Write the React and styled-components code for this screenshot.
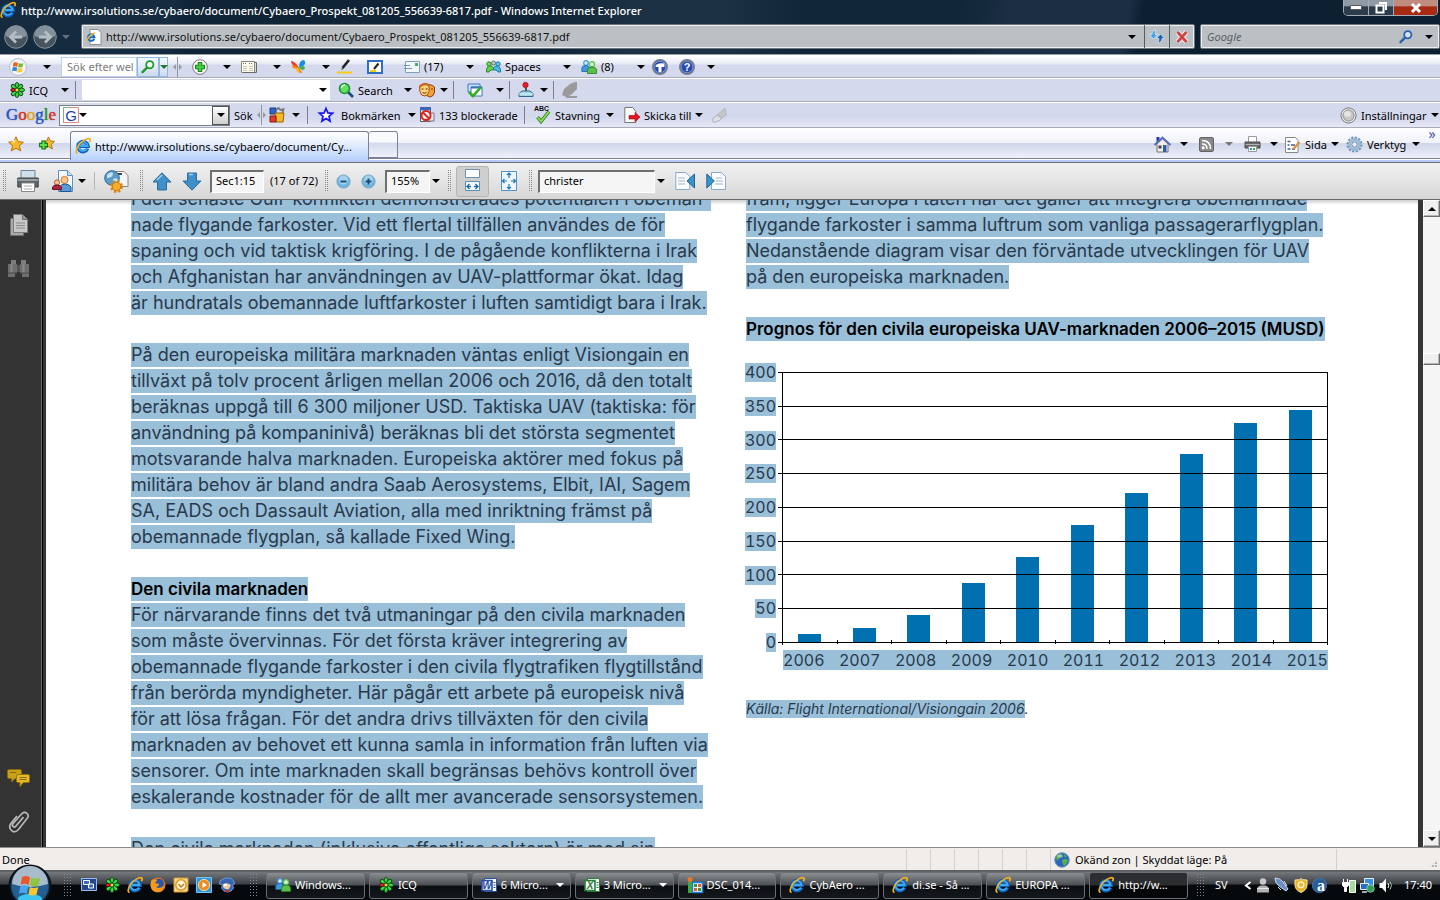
import React from 'react';
import styled, { createGlobalStyle, css } from 'styled-components';

const GlobalStyle = createGlobalStyle`
  *, *::before, *::after { box-sizing: border-box; }
  body { margin: 0; font-family: "Noto Sans", "Open Sans", sans-serif; font-size: 11px; color: #000; overflow: hidden; }
  button, input { font: inherit; color: inherit; }
  button { border: 0; padding: 0; background: none; }
  h2, p, ul { margin: 0; padding: 0; }
`;

/* ---------- shared pieces ---------- */

const Svg = styled.svg`
  display: block;
  flex: none;
  overflow: visible;
`;

const Caret = styled.i`
  flex: none;
  border: 4px solid transparent;
  border-top-color: ${(p) => p.$color || '#000'};
  border-bottom: 0;
`;

const Tool = styled.button`
  display: flex;
  align-items: center;
  flex: none;
  gap: ${(p) => p.$gap || 4}px;
  height: 20px;
  width: ${(p) => p.$w}px;
  margin-right: ${(p) => p.$mr ?? 10}px;
  white-space: nowrap;
  & > i { margin-left: auto; }
`;

const Rule = styled.span`
  flex: none;
  width: 1px;
  height: 18px;
  margin-right: ${(p) => p.$mr ?? 10}px;
  background: ${(p) => p.$color || '#7c7f8f'};
`;

const Grip = styled.span`
  flex: none;
  width: ${(p) => p.$w || 4}px;
  height: 22px;
  margin-right: ${(p) => p.$mr ?? 10}px;
  background-image: conic-gradient(at 1px 1px, transparent 75%, ${(p) => p.$color || '#8a8a8a'} 0);
  background-size: ${(p) => p.$pitch || 2}px ${(p) => p.$pitch || 2}px;
`;

const Spacer = styled.span`
  flex: 1;
`;

/* ---------- icons ---------- */

const IE = ({ s = 16 }) => (
  <Svg width={s} height={s} viewBox="0 0 16 16">
    <path d="M12.6 10.6A5 5 0 1 1 13 8.2H5" fill="none" stroke="#0b5fc0" strokeWidth="3.6" />
    <path d="M12 10.6A4.6 4.6 0 1 1 12.6 8H5" fill="none" stroke="#3fa9f2" strokeWidth="1.8" />
    <path d="M2.6 15C.6 15.6.6 12 3.4 7.6 6.6 3 12.6-.2 14.6 1c1 .7.6 2.2-.2 3.4" fill="none" stroke="#f2b01e" strokeWidth="1.7" />
  </Svg>
);

const PageIE = () => (
  <Svg width="16" height="16" viewBox="0 0 16 16">
    <path d="M4 .5h8l3 3v12H4z" fill="#fff" stroke="#8a8f94" />
    <g transform="translate(0 3) scale(.65)">
      <path d="M12.6 10.6A5 5 0 1 1 13 8.2H5" fill="none" stroke="#1368c8" strokeWidth="3" />
      <path d="M2 14C1 10 9 1 14 2" fill="none" stroke="#f2b01e" strokeWidth="2" />
    </g>
  </Svg>
);

const Orb = () => (
  <Svg width="18" height="18" viewBox="0 0 18 18">
    <circle cx="9" cy="9" r="8.5" fill="#f4f4f6" stroke="#b9bdc8" />
    <g transform="translate(3 3) scale(.75)">
      <path d="M2 2q3-1 6 .5L7 8q-3-2-6-.5z" fill="#f0602a" />
      <path d="M9 3q3 1 6 0l-1 5q-3 1-6 0z" fill="#7ab82a" />
      <path d="M1 8.5q3-1 6 .5l-1 5q-3-2-6-.5z" fill="#2f86dd" />
      <path d="M8 9q3 1.5 6 .5l-1 5q-3 1-6 0z" fill="#fcc72b" />
    </g>
  </Svg>
);

const Magnifier = ({ color = '#1f9a2c', s = 14 }) => (
  <Svg width={s} height={s} viewBox="0 0 14 14">
    <circle cx="8.8" cy="4.8" r="3.6" fill="#fff" fillOpacity=".5" stroke={color} strokeWidth="1.8" />
    <path d="M6 7.6 1.5 12.2" stroke={color} strokeWidth="2.4" strokeLinecap="round" />
  </Svg>
);

const PlusCircle = () => (
  <Svg width="16" height="16" viewBox="0 0 16 16">
    <circle cx="8" cy="8" r="7.3" fill="#fff" stroke="#777" />
    <path d="M8 3v10M3 8h10" stroke="#18851d" strokeWidth="4.6" />
    <path d="M8 4v8M4 8h8" stroke="#43cf3f" strokeWidth="2.6" />
  </Svg>
);

const News = () => (
  <Svg width="16" height="12" viewBox="0 0 16 12">
    <path d="M.5.5h13v11H.5z" fill="#fbf9ea" stroke="#8b8878" />
    <path d="M13.5 1.5h2v10h-13" fill="none" stroke="#6b6a62" />
    <path d="M2 2.5h4M8 2.5h4" stroke="#77756a" strokeDasharray="1 1" />
    <path d="M2 5.5h4M2 7.5h4M2 9.5h4M8 5.5h4M8 7.5h4M8 9.5h4" stroke="#cbc8b8" />
  </Svg>
);

const Butterfly = () => (
  <Svg width="16" height="14" viewBox="0 0 16 14">
    <path d="M8 8Q4 1 0 1q0 5 8 7z" fill="#ef3b24" />
    <path d="M8 8Q1 4 1 6q1 4 7 2z" fill="#ff8a00" />
    <path d="M8 7.500Q8 0 13 0q3 3-1 6z" fill="#1a8ce8" />
    <path d="M8 7.500q5-3 6 0-1 5-6 0z" fill="#35b44a" />
    <path d="M8 7.500 11.500 13Q6 13 5 9.500z" fill="#ff7a1a" />
    <path d="M6.500 7.500 9 13q-3-1-4-3z" fill="#ffcf20" />
  </Svg>
);

const Pen = () => (
  <Svg width="16" height="15" viewBox="0 0 16 15">
    <path d="M12 1 5.5 9" stroke="#222" strokeWidth="2.6" />
    <path d="M5.5 8 4 11.5l3-2z" fill="#555" />
    <path d="M0 13.5h15" stroke="#f6cc12" strokeWidth="2" />
  </Svg>
);

const Note = () => (
  <Svg width="16" height="14" viewBox="0 0 16 14">
    <path d="M1 1h14v12H1z" fill="#fffef4" stroke="#2c6fc4" strokeWidth="2" />
    <path d="M11.5 3.5 7 9" stroke="#222" strokeWidth="2" />
    <path d="M3 11h6" stroke="#f6cc12" strokeWidth="2" />
  </Svg>
);

const Mail = () => (
  <Svg width="16" height="12" viewBox="0 0 16 12">
    <path d="M1.5.5h14v11h-14z" fill="#f1f8fb" stroke="#7fa3b5" />
    <path d="M0 4.500h6M0 7.500h8" stroke="#6a9ab8" />
    <path d="M11 2h3v3h-3z" fill="#4aa86a" />
  </Svg>
);

const People = ({ a = '#3f97dd', b = '#5cc04a' }) => (
  <Svg width="16" height="14" viewBox="0 0 16 14">
    <circle cx="5" cy="3" r="2.3" fill="#d6ecff" stroke={a} strokeWidth="1.2" />
    <path d="M.8 11.5V8Q1 5.5 5 5.5q3 0 3.5 2.5v3.5z" fill={a} stroke="#1b68ad" strokeWidth=".8" />
    <circle cx="11" cy="4.2" r="2.5" fill="#d9f8c8" stroke={b} strokeWidth="1.2" />
    <path d="M6.5 13.5V10Q7 7 11 7q4.3 0 4.6 3v3.5z" fill={b} stroke="#23801c" strokeWidth=".8" />
  </Svg>
);

const Spaces = () => (
  <Svg width="15" height="13" viewBox="0 0 15 13">
    <circle cx="3" cy="4" r="2.2" fill="#6fd95b" stroke="#2f8a28" />
    <circle cx="12" cy="4" r="2.2" fill="#59c7ef" stroke="#1f7fa8" />
    <path d="M.5 12V9l2-3h3l2 2v2H5l-2 2z" fill="#5fce4b" stroke="#2f8a28" />
    <path d="M14.500 12V9l-2-3h-3l-2 2v2H10l2 2z" fill="#49b7df" stroke="#1f7fa8" />
    <circle cx="7.5" cy="3" r="2" fill="#c3c8cc" stroke="#6b7175" />
  </Svg>
);

const BlueRound = ({ kind }) => (
  <Svg width="16" height="16" viewBox="0 0 16 16">
    <circle cx="8" cy="8" r="7.2" fill="#2a49ad" stroke="#7b7f87" strokeWidth="1.6" />
    <circle cx="8" cy="8" r="5.8" fill="none" stroke="#8fb0ef" strokeWidth=".7" />
    {kind === 'help' ? (
      <text x="8" y="12" textAnchor="middle" fontFamily="Liberation Sans, sans-serif" fontWeight="700" fontSize="11" fill="#fff">?</text>
    ) : (
      <path d="M3.6 7Q5 3.500 12.400 4.500V8H9.5v5h-3V8H3.6z" fill="#fff" />
    )}
  </Svg>
);

const Flower = () => (
  <Svg width="16" height="16" viewBox="0 0 16 16">
    {[0, 45, 90, 135, 180, 225, 315].map((d) => (
      <ellipse key={d} cx="8" cy="3.4" rx="1.9" ry="2.9" fill="#3ad845" stroke="#0c3d10" strokeWidth=".9" transform={`rotate(${d} 8 8)`} />
    ))}
    <ellipse cx="8" cy="4" rx="1.6" ry="2.2" fill="#e8222a" stroke="#4f0d0d" strokeWidth=".9" transform="rotate(270 8 8)" />
    <circle cx="8" cy="8" r="1.6" fill="#f5ea3a" stroke="#3c5a10" strokeWidth=".6" />
  </Svg>
);

const GreenSearch = () => (
  <Svg width="16" height="16" viewBox="0 0 16 16">
    <path d="m10 10 5 5" stroke="#14507e" strokeWidth="2.6" />
    <circle cx="6.5" cy="6.5" r="5" fill="#62e25f" stroke="#1d8f38" strokeWidth="1.6" />
    <path d="M3.5 6q.5-3 3.5-3" stroke="#e9ffe4" strokeWidth="1.5" fill="none" />
  </Svg>
);

const Faces = () => (
  <Svg width="16" height="15" viewBox="0 0 16 15">
    <path d="M7 3q4-3 8.500 1v5q-.5 4-4 5-4 0-4.500-4z" fill="#f2a33a" stroke="#8a3a10" />
    <path d="M.5 3q4-4 9-1.5 1 2 .5 7-1 4-4 4.500-4 0-5-4z" fill="#fcd27a" stroke="#a04a12" />
    <path d="M2.500 6h2M6.500 6h2M3.500 9.500q2 1.500 4 0M12 6h2" stroke="#7a2f08" fill="none" />
    <path d="M.5 4q4-4 9-2" stroke="#c8661a" strokeWidth="2" fill="none" />
  </Svg>
);

const CheckWin = () => (
  <Svg width="17" height="15" viewBox="0 0 17 15">
    <path d="M1 1h12v8H1z" fill="#cfe3fa" stroke="#3a74c4" />
    <path d="M4 4h11v9H4z" fill="#fff" stroke="#3a74c4" />
    <path d="M4 4.5h11" stroke="#3a74c4" strokeWidth="2" />
    <path d="m2 9 4 4 8-9" fill="none" stroke="#2fae1f" strokeWidth="2.6" />
  </Svg>
);

const Joystick = () => (
  <Svg width="16" height="16" viewBox="0 0 16 16">
    <path d="M8 5v6" stroke="#555" strokeWidth="2" />
    <circle cx="7.5" cy="3" r="2.7" fill="#e8202a" stroke="#7d0c10" strokeWidth=".6" />
    <path d="m1 11.5 3-2.5h8l3 2.5v3H1z" fill="#9fd3e6" stroke="#2d6a8c" />
    <path d="M1 12h14" stroke="#e6f7fc" />
  </Svg>
);

const Eraser = () => (
  <Svg width="16" height="16" viewBox="0 0 16 16">
    <path d="M15 0v7l-6 6-5 2-4-2 2-6 6-5 5-2z" fill="#9b9b9b" />
    <path d="M4 15h11" stroke="#9b9b9b" strokeWidth="2" />
  </Svg>
);

const Brush = () => (
  <Svg width="16" height="15" viewBox="0 0 16 15">
    <path d="m14 0 1.5 7-5 3.5-4-3.5z" fill="#c4c6cc" stroke="#a2a5ad" strokeWidth=".6" />
    <path d="m6.5 7 4 3.5-2 2-6 2L1 12l2.5-3z" fill="#dddfe4" stroke="#a2a5ad" strokeWidth=".8" />
  </Svg>
);

const GBox = () => (
  <Svg width="16" height="16" viewBox="0 0 16 16">
    <path d="M.5.5h15v15H.5z" fill="#fff" stroke="#d88" />
    <path d="M.5 15.5V.5h8" fill="none" stroke="#7fae85" />
    <text x="8" y="13.5" textAnchor="middle" fontFamily="Liberation Sans, sans-serif" fontSize="15" fill="#1f3fae">G</text>
  </Svg>
);

const Gadgets = () => (
  <Svg width="17" height="16" viewBox="0 0 17 16">
    <path d="M1 1h6v6H1z" fill="#2f64c8" stroke="#183a80" />
    <path d="M7 3 9.5 1l2 2 3-1-1 4" fill="none" stroke="#777" strokeWidth="1.8" />
    <path d="M6 6h9l-1 9H7z" fill="#f4b92a" stroke="#9a6608" />
    <path d="M1 9h6v6H1z" fill="#e03a2a" stroke="#80180e" />
  </Svg>
);

const StarOutline = () => (
  <Svg width="16" height="16" viewBox="0 0 16 16">
    <path d="m8 1.5 1.900 4.400 4.700.4-3.600 3.100 1.100 4.700L8 11.600l-4.100 2.500L5 9.400 1.400 6.300l4.700-.4z" fill="#fff" stroke="#1616f0" strokeWidth="1.7" />
  </Svg>
);

const Blocked = () => (
  <Svg width="16" height="16" viewBox="0 0 16 16">
    <path d="M1.500.5h10v14h-10z" fill="#fff" stroke="#555" />
    <path d="M1 2h11" stroke="#3568c8" strokeWidth="3" />
    <path d="M9 6h6v8H4" fill="#e8eaf0" stroke="#777" />
    <circle cx="7" cy="8.5" r="4.500" fill="#fff" fillOpacity=".8" stroke="#e0201c" strokeWidth="2" />
    <path d="m4 5.5 6 6" stroke="#e0201c" strokeWidth="2" />
  </Svg>
);

const Spell = () => (
  <Svg width="17" height="18" viewBox="0 0 17 18">
    <text x="0" y="5" fontFamily="Liberation Sans, sans-serif" fontWeight="700" fontSize="7" fill="#111">ABC</text>
    <path d="m3.5 11 3.500 4.500 8-10" fill="none" stroke="#2e7f1d" strokeWidth="3.4" />
    <path d="m3.5 11 3.500 4.500 8-10" fill="none" stroke="#8fdc5e" strokeWidth="1.8" />
  </Svg>
);

const SendTo = () => (
  <Svg width="16" height="16" viewBox="0 0 16 16">
    <path d="M.8.5h8l3 4v11h-11z" fill="#fbfbf6" stroke="#777" />
    <path d="M5 8.500h6V5.500l5 4.500-5 5v-3H5z" fill="#e81420" stroke="#8f0a10" strokeWidth=".6" />
  </Svg>
);

const GoldStar = () => (
  <Svg width="16" height="16" viewBox="0 0 16 16">
    <path d="m8 .8 2.200 4.900 5.200.5-4 3.500 1.300 5.200L8 12.200l-4.700 2.700 1.300-5.200-4-3.500 5.200-.5z" fill="#fbb829" stroke="#b9720d" />
    <path d="M8 3 6.700 6.600 3 7z" fill="#ffe9a0" />
  </Svg>
);

const AddStar = () => (
  <Svg width="17" height="16" viewBox="0 0 17 16">
    <path d="m10.5 1 1.800 4 4.200.4-3.200 3 1 4.600-3.800-2.400-4 2.400 1-4.600-3-3 4.200-.4z" fill="#fbb829" stroke="#b9720d" />
    <path d="M5.500 4.500v9M1 9h9" stroke="#157a1a" strokeWidth="4.4" />
    <path d="M5.500 5.500v7M2 9h7" stroke="#5fe04a" strokeWidth="2.2" />
  </Svg>
);

const House = () => (
  <Svg width="17" height="17" viewBox="0 0 17 17">
    <path d="M3 8v8h11V8L8.500 3z" fill="#f4f1ea" stroke="#77736a" />
    <path d="M2.500 1h3v5h-3z" fill="#2a34a8" />
    <path d="M.5 9 8.500 1.500l8 7.500" fill="none" stroke="#5a6fc4" strokeWidth="2" />
    <path d="M9 9h3.500v7H9z" fill="#2d5faa" />
    <path d="M4.500 9.500h3v3h-3z" fill="#454545" />
  </Svg>
);

const Feed = () => (
  <Svg width="15" height="15" viewBox="0 0 15 15">
    <rect x=".5" y=".5" width="14" height="14" rx="1.500" fill="#898989" stroke="#636363" />
    <circle cx="4.200" cy="10.800" r="1.500" fill="#fff" />
    <path d="M3 7q5 0 5 5M3 3.500q8.500 0 8.500 8.500" fill="none" stroke="#fff" strokeWidth="1.600" />
  </Svg>
);

const SmallPrinter = () => (
  <Svg width="17" height="16" viewBox="0 0 17 16">
    <path d="M4.500.5h8v6h-8z" fill="#fff" stroke="#999" />
    <path d="M1 6h15v6H1z" fill="#6a6a6a" stroke="#4a4a4a" />
    <path d="M1.500 8.500h14" stroke="#b5b5b5" />
    <path d="M4.500 10.500h8v5h-8z" fill="#fff" stroke="#999" />
    <path d="M6 13h2" stroke="#2f86dd" strokeWidth="2" />
    <path d="M9 13h2" stroke="#2fae1f" strokeWidth="2" />
  </Svg>
);

const PageEdit = () => (
  <Svg width="17" height="17" viewBox="0 0 17 17">
    <path d="M1.500 1.500h10l2.500 3v12h-12.500z" fill="#fff" stroke="#888" />
    <path d="M3.500 5.500h3M3.500 9h2M3.500 13h3M7 9h4M8 13h3" stroke="#4a5a90" strokeWidth="1.500" />
    <path d="m15.500 6-6 7" stroke="#d9973a" strokeWidth="2.400" />
  </Svg>
);

const Gear = () => (
  <Svg width="17" height="17" viewBox="0 0 17 17">
    <circle cx="8.500" cy="8.500" r="6.800" fill="none" stroke="#7396b8" strokeWidth="2.400" strokeDasharray="2.300 1.260" />
    <circle cx="8.500" cy="8.500" r="4.800" fill="#dce9f5" stroke="#9dbad4" strokeWidth="3" />
    <circle cx="8.500" cy="8.500" r="2.600" fill="#eef2fb" stroke="#6a8cae" />
  </Svg>
);

const GreyBall = () => (
  <Svg width="17" height="17" viewBox="0 0 17 17">
    <circle cx="8.500" cy="8.500" r="7.600" fill="#eee" stroke="#777" />
    <circle cx="8.500" cy="8.500" r="5.600" fill="#c6c6c6" stroke="#8f8f8f" />
    <ellipse cx="7.500" cy="7" rx="3.500" ry="3" fill="#e3e3e3" />
  </Svg>
);

const Printer = () => (
  <Svg width="22" height="24" viewBox="0 0 22 24">
    <path d="M4 1.500h14v8H4z" fill="#cfe0ea" stroke="#6f8796" />
    <path d="M.8 9h20.400v9H.8z" fill="#5e6468" stroke="#3d4245" />
    <path d="M1 11h20" stroke="#9aa0a4" strokeWidth="2" />
    <path d="M4.500 14h13v8.500h-13z" fill="#fff" stroke="#888" />
    <path d="M7 17h8M7 20h8" stroke="#aaa" />
  </Svg>
);

const Collab = () => (
  <Svg width="22" height="24" viewBox="0 0 22 24">
    <path d="M6.500 1.500h9l5 5v16H6.500z" fill="#f3f9fe" stroke="#5b8fc0" />
    <path d="M15.500 1.500v5h5" fill="#c6dff4" stroke="#5b8fc0" />
    <circle cx="12.500" cy="11" r="3.600" fill="#f9c48c" stroke="#d07c2c" />
    <path d="M8 22.500v-5q1-2.500 5-2.500t6 3v4.500z" fill="#5b9ad8" stroke="#1d5798" />
    <circle cx="5" cy="13.500" r="2.600" fill="#f9c48c" stroke="#b35a2c" />
    <path d="M.5 20.500V18q1-2 4.500-2t4.500 2v2.500z" fill="#a82440" stroke="#6e1026" />
  </Svg>
);

const GlobeGear = () => (
  <Svg width="26" height="24" viewBox="0 0 26 24">
    <path d="M11 2.500h9l4 4v11H11z" fill="#f5f5f5" stroke="#888" />
    <path d="M11 5h7" stroke="#444" strokeWidth="2" />
    <circle cx="8" cy="9" r="7.300" fill="#5d9bc8" stroke="#2e6a98" />
    <path d="M3 6q3-4 6-2 0 3-2 4T3 9zM9 10q4-2 5 1l-3 4q-2-2-2-5z" fill="#c7e2f2" />
    <circle cx="12.500" cy="17.500" r="5.200" fill="none" stroke="#d98a14" strokeWidth="2.600" strokeDasharray="2.300 1.800" />
    <circle cx="12.500" cy="17.500" r="4.300" fill="#f9ab2e" stroke="#c4760c" />
  </Svg>
);

const BigArrow = ({ down }) => (
  <Svg width="20" height="19" viewBox="0 0 20 19">
    <path transform={down ? 'rotate(180 10 9.500)' : undefined} d="M10 .8 19 10h-4.500v8h-9v-8H1z" fill="#3f8fc8" stroke="#2b6c9e" />
    <path d={down ? 'M7 2.500h4' : 'M10 3 5 8'} stroke="#a6d3ef" strokeWidth="1.500" />
  </Svg>
);

const ZoomDot = ({ plus }) => (
  <Svg width="15" height="15" viewBox="0 0 15 15">
    <circle cx="7.500" cy="7.500" r="6.600" fill="#6fb4de" stroke="#7ba7c4" />
    <circle cx="7.500" cy="6" r="4.500" fill="#a5d2ec" />
    <path d={plus ? 'M7.500 4.500v6M4.500 7.500h6' : 'M4.500 7.500h6'} stroke="#174f7c" strokeWidth="2" />
  </Svg>
);

const FitWidth = () => (
  <Svg width="17" height="24" viewBox="0 0 17 24">
    <path d="M1.500.5h14v8h-14z" fill="#fff" stroke="#6f93ad" />
    <path d="M1.500 12.500h14v9h-14z" fill="#f2f9fd" stroke="#5b8fb4" />
    <path d="M3 17.500h4M10 17.500h4M5.500 15 3 17.500 5.500 20M11.500 15l2.500 2.500-2.500 2.500" fill="none" stroke="#1f6a9e" strokeWidth="1.300" />
  </Svg>
);

const FitPage = () => (
  <Svg width="16" height="20" viewBox="0 0 16 20">
    <path d="M.5.500h15v19H.5z" fill="#eef7fd" stroke="#4f93c6" />
    <path d="M8 2v5M8 13v5M1.500 10H6M10 10h4.500M6 4l2-2 2 2M6 16l2 2 2-2M3.500 8l-2 2 2 2M12.500 8l2 2-2 2" fill="none" stroke="#1f78b4" strokeWidth="1.200" />
  </Svg>
);

const FindDoc = ({ prev }) => (
  <Svg width="21" height="18" viewBox="0 0 21 18">
    <path d={prev ? 'M.8.500h10l4 4v13h-14z' : 'M5.500.500h10l4 4v13h-14z'} fill="#fafcff" stroke="#88a8cc" />
    <path d={prev ? 'M3 6h7M3 9h7M3 12h7' : 'M10 6h6M10 9h7M9 12h8'} stroke="#a9b2bc" />
    <path d={prev ? 'M19.500 2v14L12 9z' : 'M.8 2v14L8.300 9z'} fill="#3a93c9" stroke="#1d6796" />
  </Svg>
);

const PagesIcon = () => (
  <Svg width="18" height="22" viewBox="0 0 18 22">
    <path d="M.5 4.500h13v17H.5z" fill="#a9a9a9" stroke="#6f6f6f" />
    <path d="M3.500.5h9l5 5v13h-14z" fill="#c8c8c8" stroke="#7d7d7d" />
    <path d="M12.500.5v5h5" fill="#999" stroke="#6b6b6b" />
    <path d="M6 9h9M6 11.500h9M6 14h9" stroke="#8a8a8a" />
  </Svg>
);

const Binoculars = () => (
  <Svg width="21" height="18" viewBox="0 0 21 18">
    <path d="M3 0h5v4H3zM13 0h5v4h-5z" fill="#7d7d7d" />
    <path d="M0 4h9v13H0zM12 4h9v13h-9z" fill="#6e6e6e" />
    <path d="M9 5h3v7H9z" fill="#565656" />
    <path d="M7 13h2v5H7zM12 13h2v5h-2z" fill="#333" />
    <path d="M3.500 4v9M15.500 4v9" stroke="#8a8a8a" strokeWidth="2" />
    <path d="M0 13h9M12 13h9" stroke="#4b4b4b" />
  </Svg>
);

const Bubbles = () => (
  <Svg width="23" height="18" viewBox="0 0 23 18">
    <path d="M2 .5h11q1.500 0 1.500 1.500v6q0 1.500-1.500 1.500H8L4.500 13V9.500H2Q.5 9.500.5 8V2Q.5.500 2 .5z" fill="#c9a01a" stroke="#8a6a08" />
    <path d="M11 5.500h10q1.500 0 1.500 1.500v5q0 1.500-1.500 1.500h-4.500L13 17.500v-4h-2q-1.500 0-1.500-1.500V7q0-1.500 1.500-1.500z" fill="#e3b926" stroke="#94720c" />
    <path d="M12.500 8.500h7M12.500 10.500h7M3 3.500h6" stroke="#8a6a08" />
  </Svg>
);

const Clip = () => (
  <Svg width="20" height="22" viewBox="0 0 20 22">
    <path d="m14.500 6-7.500 9q-1.500 2-3 .5T4.500 12L12.500 3q3-3 5.500-.5t0 5L9.500 18.500q-4 4-7 1t-1-6.500L8 5" fill="none" stroke="#b9b9b9" strokeWidth="1.700" />
  </Svg>
);

const Globe = () => (
  <Svg width="16" height="16" viewBox="0 0 16 16">
    <circle cx="8" cy="8" r="7.300" fill="#2a66c0" stroke="#7b98b8" />
    <path d="M2 5q3-4 6-3 0 3-2 4T3 9zM8 8q4-2 6 0-1 5-4 6-2-3-2-6zM10 2l3 2-2 2z" fill="#58b04a" />
    <ellipse cx="6" cy="4" rx="3" ry="1.600" fill="#fff" fillOpacity=".4" />
  </Svg>
);

const Desktop = () => (
  <Svg width="16" height="14" viewBox="0 0 16 14">
    <path d="M.5.500h15v12H.5z" fill="#21488f" stroke="#9fb9e6" />
    <path d="M2.500 2.500h6v4h-6zM7.500 6h5v4h-5z" fill="#3d68b8" stroke="#fff" />
  </Svg>
);

const Firefox = () => (
  <Svg width="16" height="16" viewBox="0 0 16 16">
    <circle cx="8" cy="8" r="7.500" fill="#e8731a" />
    <circle cx="9" cy="6.500" r="4.800" fill="#2a56a8" />
    <path d="M1 4Q3 1 4 3q2-1 3 .5L5 6q2 1 4 .5 0 3-3 3.500 3 2.500 8-1-2 6-7 6T.6 9z" fill="#f79a1e" />
  </Svg>
);

const Outlook = () => (
  <Svg width="16" height="16" viewBox="0 0 16 16">
    <path d="M1 1h14v13l-2 1H1z" fill="#f7d793" stroke="#d59a28" />
    <circle cx="8" cy="8" r="5.200" fill="#fff6dc" stroke="#dd9a22" strokeWidth="1.600" />
    <path d="m5.500 7 2.500 3 3-3" fill="none" stroke="#b87912" strokeWidth="1.400" />
  </Svg>
);

const MediaPlayer = () => (
  <Svg width="16" height="16" viewBox="0 0 16 16">
    <path d="M.5.500h15v15H.5z" fill="#2b97dd" stroke="#7cc4ee" />
    <circle cx="8" cy="8" r="5.600" fill="#f08a1c" stroke="#fbd69c" />
    <path d="m6.500 5 4.500 3-4.500 3z" fill="#fff" />
  </Svg>
);

const Hedgehog = () => (
  <Svg width="16" height="16" viewBox="0 0 16 16">
    <path d="M1 4q4-4 9-3 5 1 5.500 6l-2 1 1 3q-2 4-6 4t-6-4l1-3-3-1z" fill="#3565b4" stroke="#6f9bd8" />
    <path d="M4 7q4-2 8 1l-2 4q-4 1-6-2z" fill="#f0c9a0" />
    <path d="M5 7h3v2H5z" fill="#fff" />
    <path d="M6 14h5" stroke="#c83020" strokeWidth="1.500" />
  </Svg>
);

const Office = ({ letter, color }) => (
  <Svg width="16" height="16" viewBox="0 0 16 16">
    <path d="M3.500 1.500h12v13h-12z" fill="#fff" stroke={color} />
    <path d="M1 3.500h10v10H1z" fill="#f4f7fb" stroke={color} strokeWidth="1.600" />
    <text x="6" y="12" textAnchor="middle" fontFamily="Liberation Sans, sans-serif" fontStyle="italic" fontWeight="700" fontSize="10" fill={color}>{letter}</text>
    <path d="M12.500 5.500h2M12.500 8h2M12.500 10.500h2" stroke={color} />
  </Svg>
);

const Photo = () => (
  <Svg width="16" height="16" viewBox="0 0 16 16">
    <path d="M1 5h4v11H1z" fill="#3fa83a" />
    <circle cx="3" cy="2.500" r="2.500" fill="#f07818" />
    <path d="M5.500 5.500h10v10h-10z" fill="#fff" stroke="#1e7ade" strokeWidth="1.600" />
    <path d="M7 7h3v3H7zM11 11h3v3h-3z" fill="#2a9a3c" />
    <path d="M11 7h3v3h-3zM7 11h3v3H7z" fill="#f05a28" />
  </Svg>
);

const Shuttle = () => (
  <Svg width="16" height="16" viewBox="0 0 16 16">
    <path d="M1 1q5 0 8 4l5 7-2 2-7-5Q1 6 1 1z" fill="#6a8fc4" stroke="#c8d8ee" />
    <path d="m4 10 3 3M10 4l3 5" stroke="#dfe8f4" />
  </Svg>
);

const Shield = () => (
  <Svg width="14" height="15" viewBox="0 0 14 15">
    <path d="M1 2q6 0 6-1.500Q7 2 13 2v5q0 5-6 7.500Q1 12 1 7z" fill="#e8b62c" stroke="#fbe6a2" />
    <circle cx="7" cy="6.800" r="2.800" fill="none" stroke="#fff4c8" strokeWidth="1.400" />
  </Svg>
);

const ABall = () => (
  <Svg width="16" height="15" viewBox="0 0 16 15">
    <circle cx="7.500" cy="7.500" r="7" fill="#2a5c9c" stroke="#4a78ac" />
    <text x="9" y="12.500" textAnchor="middle" fontFamily="Liberation Serif, serif" fontWeight="700" fontSize="16" fill="#fff">a</text>
  </Svg>
);

const Pawn = () => (
  <Svg width="14" height="15" viewBox="0 0 14 15">
    <circle cx="7" cy="3.500" r="3.200" fill="#c9c9c9" />
    <path d="M1 14.500v-3q0-3 3.500-4h5q3.500 1 3.500 4v3z" fill="#b2b2b2" />
    <path d="M1 10.500h12" stroke="#e6e6e6" />
  </Svg>
);

const Battery = () => (
  <Svg width="14" height="15" viewBox="0 0 14 15">
    <path d="M1.500 1v3M5.500 1v3M.5 4.500h6v3l-2 2v4h-2v-4l-2-2z" fill="#fff" stroke="#fff" />
    <path d="M7.500 2.500h6v12h-6z" fill="#a7dba0" stroke="#fff" />
  </Svg>
);

const Network = () => (
  <Svg width="15" height="15" viewBox="0 0 15 15">
    <path d="M4.500.5h9v7h-9z" fill="#3d8fe6" stroke="#e6f1fc" />
    <path d="M.5 5.500h8v6h-8z" fill="#2a6dc8" stroke="#e6f1fc" />
    <path d="M2 14h5" stroke="#ddd" strokeWidth="1.500" />
    <circle cx="10.500" cy="10.500" r="3.800" fill="#37a04a" stroke="#9fd8f0" strokeWidth=".7" />
  </Svg>
);

const Speaker = () => (
  <Svg width="15" height="15" viewBox="0 0 15 15">
    <path d="M.5 5h2.500l4-4.500v14L3 10H.5z" fill="#fff" />
    <path d="M9 5q1.500 2.500 0 5" stroke="#fff" fill="none" />
    <path d="M11 3.500q3 4 0 8" stroke="#8fd08a" fill="none" />
  </Svg>
);

const RoundArrow = ({ right }) => (
  <Svg width="24" height="24" viewBox="0 0 24 24">
    <circle cx="12" cy="12" r="11.300" fill="#46535f" stroke="#8b959e" />
    <path d="M1.500 11a10.500 10.500 0 0 1 21 0q-10 5-21 0z" fill="#84909b" />
    <path transform={right ? 'rotate(180 12 12)' : undefined} d="M18 12H7M12 6.500 6.500 12l5.500 5.500" fill="none" stroke="#b5bdc4" strokeWidth="2.800" />
  </Svg>
);

const Refresh = () => (
  <Svg width="16" height="15" viewBox="0 0 16 15">
    <path d="M7 1C4.500 1.500 3 3 3 5.500H.5L4.500 10l4-4.500H6C6 3.500 6.500 2.500 7 1z" fill="#3d9fe8" stroke="#f0f6fc" strokeWidth=".6" />
    <path d="M9 14c2.500-.5 4-2 4-4.500h2.500L11.500 5l-4 4.500H10C10 11.500 9.500 12.500 9 14z" fill="#1d62b4" stroke="#f0f6fc" strokeWidth=".6" />
  </Svg>
);

const Cross = () => (
  <Svg width="14" height="14" viewBox="0 0 14 14">
    <path d="m2.500 2 9 10M11.500 2l-9 10" stroke="#f4eaea" strokeWidth="5" />
    <path d="m2.500 2 9 10M11.500 2l-9 10" stroke="#cf4545" strokeWidth="2.800" />
  </Svg>
);

/* ---------- window frame ---------- */

const Window = styled.div`
  display: flex;
  flex-direction: column;
  height: 100vh;
`;

const Frame = styled.header`
  flex: none;
  height: 55px;
  color: #fff;
  background: linear-gradient(100deg, #152b40 0 12%, #0f2436 13% 38%, #1d3145 44% 50%, #102538 56% 66%, #1b2e43 70% 78%, #0d2032 79% 100%);
  border-bottom: 1px solid #97a0a8;
`;

const TitleRow = styled.div`
  display: flex;
  align-items: flex-start;
  height: 23px;
`;

const WindowTitle = styled.h1`
  display: flex;
  align-items: center;
  gap: 5px;
  height: 20px;
  margin: 0;
  flex: 1;
  font-size: 11px;
  font-weight: 500;
`;

const WindowButtons = styled.div`
  display: flex;
  height: 16px;
  margin-right: 2px;
  border: 1px solid #a5adb4;
  border-top: 0;
  border-radius: 0 0 5px 5px;
  overflow: hidden;
`;

const WindowButton = styled.button`
  display: grid;
  place-items: center;
  width: ${(p) => (p.$close ? 43 : 25)}px;
  border-right: ${(p) => (p.$close ? 0 : 1)}px solid #a5adb4;
  background: ${(p) => (p.$close
    ? 'linear-gradient(#c08c80 0 40%, #a82a12 45% 100%)'
    : 'linear-gradient(#8f9aa5 0 40%, #2c3c4c 45% 100%)')};
`;

const NavRow = styled.div`
  display: flex;
  align-items: center;
  height: 27px;
  padding-left: 4px;
`;

const Travel = styled.div`
  display: flex;
  align-items: center;
  gap: 5px;
  width: 77px;
`;

const navBox = css`
  display: flex;
  align-items: center;
  height: 25px;
  border: 1px solid #6d757c;
  box-shadow: inset 0 0 0 1px #eef0f1;
  background: #bbc0c4;
  color: #111;
  border-radius: 2px;
`;

const AddressBox = styled.form`
  ${navBox}
  flex: 1;
  padding-left: 4px;
  margin-right: 5px;
`;

const AddressInput = styled.input`
  flex: 1;
  min-width: 0;
  padding: 0 4px;
  border: 0;
  outline: 0;
  background: none;
`;

const AddressButton = styled.button`
  display: grid;
  place-items: center;
  width: 25px;
  height: 23px;
  border-left: ${(p) => (p.$plain ? 0 : 1)}px solid #555c62;
`;

const SearchBox = styled.form`
  ${navBox}
  width: 240px;
  padding-right: 6px;
  gap: 12px;
`;

const SearchInput = styled(AddressInput)`
  padding-left: 6px;
  font-style: italic;
  &::placeholder { color: #5d6165; opacity: 1; }
`;

/* ---------- toolbars ---------- */

const Bar = styled.div`
  display: flex;
  align-items: center;
  flex: none;
  height: ${(p) => p.$h}px;
  padding-left: ${(p) => p.$pl}px;
  border-top: 1px solid #fff;
  border-bottom: 1px solid #a9acb8;
  background: ${(p) => p.$bg || '#d4d9ed'};
`;

const LinkInput = styled.input`
  height: 20px;
  border: 1px solid #b9d3ec;
  padding: 0 0 0 5px;
  width: ${(p) => p.$w}px;
  background: #fff;
  outline: 0;
  &::placeholder { color: #7b7b7b; opacity: 1; }
`;

const SmallButton = styled.button`
  display: grid;
  place-items: center;
  width: ${(p) => p.$w}px;
  height: 20px;
  margin-right: ${(p) => p.$mr || 0}px;
  border: 1px solid #8fb8dc;
  background: linear-gradient(#f6f9fe, #cddaf1);
`;

const ComboBox = styled.div`
  display: flex;
  align-items: center;
  width: ${(p) => p.$w}px;
  height: ${(p) => p.$h}px;
  margin-right: ${(p) => p.$mr}px;
  padding: 0 ${(p) => (p.$framed ? 0 : 3)}px 0 3px;
  background: #fff;
  border: ${(p) => (p.$framed ? '1px solid #7a7d85' : 0)};
  & > input { flex: 1; min-width: 0; border: 0; outline: 0; background: none; }
`;

const ComboDrop = styled.button`
  display: grid;
  place-items: center;
  width: 17px;
  height: 19px;
  border: 1px solid #555;
  background: linear-gradient(#fff, #cfcfd2);
`;

const SizerGrip = styled.span`
  display: flex;
  align-items: center;
  justify-content: center;
  gap: 3px;
  width: 10px;
  height: 20px;
  margin-right: ${(p) => p.$mr}px;
  background: linear-gradient(#9296a6, #9296a6) center / 1px 100% no-repeat;
  &::before { content: ''; border: 3px solid transparent; border-right-color: #999; border-left: 0; }
  &::after { content: ''; border: 3px solid transparent; border-left-color: #999; border-right: 0; }
`;

const GoogleLogo = styled.span`
  width: 50px;
  margin-right: 3px;
  font: 17px/22px "Liberation Serif", serif;
`;

const Hue = styled.span`
  color: ${(p) => p.$c};
  text-shadow: 0 0 1px ${(p) => p.$c};
`;

const TabRow = styled.div`
  display: flex;
  align-items: center;
  flex: none;
  height: 35px;
  padding: 0 0 2px 8px;
  border-bottom: 1px solid #6c6e73;
  background: linear-gradient(#fff 0, #f0f2f9 15px, #cfd5ea 15px, #eff2fb 30px, #7b8197 30px, #7b8197 31px, #fff 31px, #fff 32px, #b5c7fb 32px);
`;

const Tab = styled.button`
  display: flex;
  align-items: center;
  align-self: flex-end;
  gap: 4px;
  width: 299px;
  height: 29px;
  padding-left: 4px;
  border: 1px solid #7b8197;
  border-bottom: 0;
  border-radius: 3px 3px 0 0;
  background: linear-gradient(#fff 0, #e9f1fd 10px, #b8d2fb 28px);
  white-space: nowrap;
`;

const NewTab = styled.button`
  align-self: flex-end;
  width: 29px;
  height: 27px;
  margin-bottom: 2px;
  border: 1px solid #7b8197;
  border-left: 0;
  border-radius: 3px 3px 0 0;
  background: linear-gradient(#fafbfe 0 10px, #d5dbee 11px, #eef1fa);
`;

const Chevron = styled.button`
  align-self: flex-start;
  width: 16px;
  font-size: 14px;
  line-height: 12px;
  color: #4a4fa8;
`;

/* ---------- PDF toolbar ---------- */

const PdfBar = styled.div`
  display: flex;
  align-items: center;
  flex: none;
  height: 37px;
  padding-left: 3px;
  border-bottom: 1px solid #6a6a6a;
  background: linear-gradient(#f1f1f1, #d7d7d7);
`;

const PdfInput = styled.input`
  width: ${(p) => p.$w}px;
  height: 23px;
  margin-right: ${(p) => p.$mr}px;
  padding: 0 4px 3px;
  border: 1px solid #fff;
  border-top: 2px solid #6f6f6f;
  border-left: 2px solid #6f6f6f;
  background: #f5f5f5;
  outline: 0;
`;

const PageCount = styled.span`
  width: 55px;
  padding-bottom: 2px;
  white-space: nowrap;
`;

const Pressed = styled.button`
  display: grid;
  place-items: center;
  width: 33px;
  height: 31px;
  margin-right: 12px;
  border: 1px solid #b5b5b5;
  border-radius: 3px;
  background: #cfcfcf;
`;

/* ---------- document ---------- */

const Viewer = styled.main`
  display: flex;
  flex: 1;
  min-height: 0;
  background: #363636;
`;

const SideNav = styled.nav`
  display: flex;
  flex-direction: column;
  align-items: center;
  gap: 24px;
  width: 42px;
  padding: 14px 4px 14px 0;
  border-right: 1px solid #6a6a6a;
  background: #333;
  margin-right: 4px;
  box-shadow: 1px 0 0 #000;
`;

const Page = styled.article`
  display: flex;
  flex: 1;
  min-width: 0;
  overflow: hidden;
  margin-right: 5px;
  padding-left: 85px;
  background: linear-gradient(#cfcfcf, #fff 5px);
  font-family: Inter, "Liberation Sans", sans-serif;
  font-size: 18px;
  line-height: 26px;
  color: #29394b;
`;

const Column = styled.section`
  flex: none;
  width: ${(p) => p.$w}px;
  margin-top: -13px;
`;

const Line = styled.div`
  height: 26px;
  white-space: nowrap;
`;

const Marked = styled.span`
  display: inline-block;
  height: 24px;
  line-height: 24px;
  vertical-align: top;
  background: #99bfd9;
`;

const Heading = styled.h2`
  height: 26px;
  font-size: 17px;
  font-weight: 600;
  color: #000;
  white-space: nowrap;
`;

const Chart = styled.figure`
  display: grid;
  grid-template-columns: 32px 552px;
  margin: 20px 0 30px -2px;
  font-size: 16px;
  font-variant-numeric: tabular-nums;
`;

const YAxis = styled.div`
  display: flex;
  flex-direction: column;
  justify-content: space-between;
  align-items: flex-end;
  height: 289px;
`;

const Tick = styled.span`
  height: 19px;
  line-height: 19px;
  background: #99bfd9;
`;

const Plot = styled.svg`
  display: block;
  margin-top: 9px;
  shape-rendering: crispEdges;
`;

const XAxis = styled.div`
  grid-column: 2;
  display: flex;
  justify-content: space-between;
  height: 20px;
  margin-top: -2px;
  margin-left: 7px;
  line-height: 20px;
  background: #99bfd9;
`;

const Source = styled.p`
  font-size: 14px;
  font-style: italic;
  line-height: 18px;
  & > span { display: inline-block; height: 18px; background: #99bfd9; }
`;

const ScrollBar = styled.div`
  display: flex;
  flex-direction: column;
  width: 17px;
  background: #f5f5f5;
`;

const ScrollButton = styled.button`
  display: grid;
  place-items: center;
  flex: none;
  width: 17px;
  height: ${(p) => p.$h || 17}px;
  border: 1px solid #fff;
  border-right-color: #6e6e6e;
  border-bottom-color: #6e6e6e;
  background: #efefef;
  box-shadow: inset -1px -1px 0 #b5b5b5;
`;

const UpCaret = styled(Caret)`
  transform: rotate(180deg);
`;

const Track = styled.span`
  flex: ${(p) => p.$grow};
`;

/* ---------- status bar and task bar ---------- */

const Status = styled.footer`
  display: flex;
  flex: none;
  height: 23px;
  border-top: 1px solid #8c8c8c;
  background: #f0edeb;
  line-height: 24px;
`;

const StatusCell = styled.span`
  display: flex;
  align-items: center;
  gap: 5px;
  width: ${(p) => p.$w}px;
  flex: ${(p) => (p.$w ? 'none' : 1)};
  padding-left: ${(p) => p.$pl ?? 2}px;
  margin-top: 1px;
  border-left: ${(p) => (p.$first ? 0 : 1)}px solid #d3d0ce;
`;

const TaskBar = styled.div`
  display: flex;
  align-items: center;
  flex: none;
  height: 30px;
  color: #fff;
  background: linear-gradient(#6f7377 0, #4a4e52 1px, #75797c 2px, #3b3f43 14px, #06090c 15px, #06090c 100%);
`;

const Start = styled.button`
  position: relative;
  width: 64px;
  height: 30px;
`;

const StartOrb = styled.svg`
  position: absolute;
  left: 8px;
  bottom: -8px;
`;

const Quick = styled.div`
  display: flex;
  align-items: center;
  gap: 7px;
  width: 169px;
`;

const Tasks = styled.div`
  display: flex;
  flex: 1;
  gap: 4px;
  min-width: 0;
`;

const Task = styled.button`
  display: flex;
  align-items: center;
  gap: 4px;
  flex: 1;
  min-width: 0;
  height: 27px;
  padding: 0 6px 1px 8px;
  border: 1px solid #6c7074;
  border-radius: 3px;
  background: ${(p) => (p.$active
    ? 'linear-gradient(#2b2d30 0 12px, #050607 13px)'
    : 'linear-gradient(#8c9093 0, #4b4f53 12px, #0c0f12 13px, #14181c 100%)')};
  white-space: nowrap;
  & > i { margin-left: auto; }
`;

const Tray = styled.div`
  display: flex;
  align-items: center;
  width: 252px;
  padding-left: 9px;
  & > svg { margin-right: 4px; }
`;

const TrayText = styled.span`
  width: ${(p) => p.$w}px;
  line-height: 26px;
  text-align: ${(p) => p.$align || 'left'};
`;

const SizeGrip = styled.span`
  width: 9px;
  height: 9px;
  margin: auto 2px 2px auto;
  background: conic-gradient(at 2px 2px, transparent 75%, #b5b2b0 0) 0 0 / 3px 3px;
  clip-path: polygon(100% 0, 100% 100%, 0 100%);
`;

/* ---------- content ---------- */

const leftLines = [
  'I den senaste Gulf-konflikten demonstrerades potentialen i obeman-',
  'nade flygande farkoster. Vid ett flertal tillfällen användes de för',
  'spaning och vid taktisk krigföring. I de pågående konflikterna i Irak',
  'och Afghanistan har användningen av UAV-plattformar ökat. Idag',
  'är hundratals obemannade luftfarkoster i luften samtidigt bara i Irak.',
  '',
  'På den europeiska militära marknaden väntas enligt Visiongain en',
  'tillväxt på tolv procent årligen mellan 2006 och 2016, då den totalt',
  'beräknas uppgå till 6 300 miljoner USD. Taktiska UAV (taktiska: för',
  'användning på kompaninivå) beräknas bli det största segmentet',
  'motsvarande halva marknaden. Europeiska aktörer med fokus på',
  'militära behov är bland andra Saab Aerosystems, Elbit, IAI, Sagem',
  'SA, EADS och Dassault Aviation, alla med inriktning främst på',
  'obemannade flygplan, så kallade Fixed Wing.',
  '',
];

const civilLines = [
  'För närvarande finns det två utmaningar på den civila marknaden',
  'som måste övervinnas. För det första kräver integrering av',
  'obemannade flygande farkoster i den civila flygtrafiken flygtillstånd',
  'från berörda myndigheter. Här pågår ett arbete på europeisk nivå',
  'för att lösa frågan. För det andra drivs tillväxten för den civila',
  'marknaden av behovet ett kunna samla in information från luften via',
  'sensorer. Om inte marknaden skall begränsas behövs kontroll över',
  'eskalerande kostnader för de allt mer avancerade sensorsystemen.',
  '',
  'Den civila marknaden (inklusive offentliga sektorn) är med sin',
];

const rightLines = [
  'fram, ligger Europa i täten när det gäller att integrera obemannade',
  'flygande farkoster i samma luftrum som vanliga passagerarflygplan.',
  'Nedanstående diagram visar den förväntade utvecklingen för UAV',
  'på den europeiska marknaden.',
  '',
];

const forecast = [
  [2006, 12], [2007, 21], [2008, 40], [2009, 88], [2010, 126],
  [2011, 174], [2012, 220], [2013, 279], [2014, 324], [2015, 343],
];

const Lines = ({ items }) => items.map((t, i) => <Line key={i}>{t && <Marked>{t}</Marked>}</Line>);

const scaleY = (v) => 270 - Math.round((v * 270) / 400);

const ForecastChart = () => (
  <Chart aria-label="Prognos">
    <YAxis>
      {[400, 350, 300, 250, 200, 150, 100, 50, 0].map((v) => <Tick key={v}>{v}</Tick>)}
    </YAxis>
    <Plot width="552" height="278" viewBox="0 0 552 278">
      {forecast.map(([year, v], i) => (
        <rect key={year} x={22 + Math.round(i * 54.5)} y={scaleY(v)} width="23" height={270 - scaleY(v)} fill="#0070b0" />
      ))}
      {[0, 50, 100, 150, 200, 250, 300, 350, 400].map((v) => (
        <rect key={v} x="2" y={scaleY(v)} width="550" height="1" />
      ))}
      <rect x="6" y="0" width="1" height="273" />
      <rect x="551" y="0" width="1" height="273" />
      {forecast.slice(1).map(([year], i) => (
        <rect key={year} x={6 + Math.round((i + 1) * 54.5)} y="268" width="1" height="4" />
      ))}
    </Plot>
    <XAxis>{forecast.map(([year]) => <span key={year}>{year}</span>)}</XAxis>
  </Chart>
);

const tasks = [
  [<People />, 'Windows...'],
  [<Flower />, 'ICQ'],
  [<Office letter="W" color="#2b50a8" />, '6 Micro...', 'group'],
  [<Office letter="X" color="#2a7d35" />, '3 Micro...', 'group'],
  [<Photo />, 'DSC_014...'],
  [<IE />, 'CybAero ...'],
  [<IE />, 'di.se - Så ...'],
  [<IE />, 'EUROPA ...'],
  [<IE />, 'http://w...', 'active'],
];

const LiveBar = () => (
  <Bar $h={23} $pl={9} $bg="linear-gradient(#fff 0, #e7eaf5 8px, #d4d9ed 9px)">
    <Tool $w={42} $mr={10} aria-label="Windows Live"><Orb /><Caret /></Tool>
    <LinkInput $w={76} placeholder="Sök efter wel" aria-label="Sök efter webbplatser" />
    <SmallButton $w={22} aria-label="Sök"><Magnifier /></SmallButton>
    <SmallButton $w={9} $mr={4} aria-label="Sökalternativ"><Caret $color="#1f7a2c" /></SmallButton>
    <SizerGrip $mr={10} />
    <Tool $w={39} aria-label="Lägg till"><PlusCircle /><Caret /></Tool>
    <Tool $w={40} aria-label="Nyheter"><News /><Caret /></Tool>
    <Tool $w={39} $mr={7} aria-label="MSN"><Butterfly /><Caret /></Tool>
    <Tool $w={20} aria-label="Markera"><Pen /></Tool>
    <Tool $w={27} aria-label="Anteckning"><Note /></Tool>
    <Tool $w={70} $mr={12} aria-label="E-post (17)"><Mail />(17)<Caret /></Tool>
    <Tool $w={85}><Spaces />Spaces<Caret /></Tool>
    <Tool $w={64} $mr={7} aria-label="Kontakter (8)"><People />(8)<Caret /></Tool>
    <Tool $w={17} aria-label="Logga in"><BlueRound /></Tool>
    <Tool $w={36} aria-label="Hjälp"><BlueRound kind="help" /><Caret /></Tool>
  </Bar>
);

const IcqBar = () => (
  <Bar $h={24} $pl={9}>
    <Tool $w={60} $mr={6}><Flower />ICQ<Caret /></Tool>
    <Rule $mr={6} />
    <ComboBox $w={248} $h={20} $mr={8}>
      <input aria-label="ICQ Search" /><Caret />
    </ComboBox>
    <Tool $w={74} $mr={7}><GreenSearch />Search<Caret /></Tool>
    <Tool $w={29} $mr={5} aria-label="Avatarer"><Faces /><Caret /></Tool>
    <Rule $mr={13} />
    <Tool $w={37} $mr={5} aria-label="Fönster"><CheckWin /><Caret /></Tool>
    <Rule $mr={8} />
    <Tool $w={30} $mr={5} aria-label="Spel"><Joystick /><Caret /></Tool>
    <Rule $mr={8} />
    <Tool $w={17} aria-label="Rensa"><Eraser /></Tool>
  </Bar>
);

const GoogleBar = () => (
  <Bar $h={26} $pl={6} $bg="linear-gradient(#d4d9ed 0 15px, #e6e9f5)">
    <GoogleLogo>
      <Hue $c="#2a52c4">G</Hue><Hue $c="#cf3424">o</Hue><Hue $c="#dfa31c">o</Hue><Hue $c="#2a52c4">g</Hue><Hue $c="#2f8f36">l</Hue><Hue $c="#cf3424">e</Hue>
    </GoogleLogo>
    <ComboBox $w={171} $h={21} $mr={4} $framed>
      <GBox /><Caret />
      <input aria-label="Google" />
      <ComboDrop aria-label="Visa förslag"><Caret /></ComboDrop>
    </ComboBox>
    <Tool $w={20} $mr={2}>Sök</Tool>
    <SizerGrip $mr={3} />
    <Tool $w={31} $mr={7} aria-label="Gadgetar"><Gadgets /><Caret /></Tool>
    <Rule $mr={10} />
    <Tool $w={92} $mr={9} $gap={7}><StarOutline />Bokmärken<Caret /></Tool>
    <Tool $w={101} $mr={4}><Blocked />133 blockerade</Tool>
    <Rule $mr={9} />
    <Tool $w={80} $mr={10}><Spell />Stavning<Caret /></Tool>
    <Tool $w={77} $mr={10}><SendTo />Skicka till<Caret /></Tool>
    <Tool $w={17} aria-label="Färgpenna"><Brush /></Tool>
    <Spacer />
    <Tool $w={96} $mr={4}><GreyBall />Inställningar<Caret /></Tool>
  </Bar>
);

export default function App() {
  return (
    <Window>
      <GlobalStyle />
      <Frame>
        <TitleRow>
          <WindowTitle><IE />http://www.irsolutions.se/cybaero/document/Cybaero_Prospekt_081205_556639-6817.pdf - Windows Internet Explorer</WindowTitle>
          <WindowButtons>
            <WindowButton aria-label="Minimera"><Svg width="12" height="5"><path d="M.5.500h11v4H.5z" fill="#fff" stroke="#555" /></Svg></WindowButton>
            <WindowButton aria-label="Återställ"><Svg width="12" height="12"><path d="M4 1h7v7M1.500 3.500h7v7h-7z" fill="none" stroke="#fff" strokeWidth="2" /></Svg></WindowButton>
            <WindowButton $close aria-label="Stäng"><Svg width="12" height="10"><path d="m2 1 8 8M10 1 2 9" stroke="#fff" strokeWidth="3" /></Svg></WindowButton>
          </WindowButtons>
        </TitleRow>
        <NavRow>
          <Travel>
            <button aria-label="Bakåt"><RoundArrow /></button>
            <button aria-label="Framåt"><RoundArrow right /></button>
            <Caret $color="#66737f" />
          </Travel>
          <AddressBox>
            <PageIE />
            <AddressInput aria-label="Adress" defaultValue="http://www.irsolutions.se/cybaero/document/Cybaero_Prospekt_081205_556639-6817.pdf" />
            <AddressButton $plain type="button" aria-label="Visa adresser"><Caret /></AddressButton>
            <AddressButton type="button" aria-label="Uppdatera"><Refresh /></AddressButton>
            <AddressButton type="button" aria-label="Stopp"><Cross /></AddressButton>
          </AddressBox>
          <SearchBox>
            <SearchInput aria-label="Sök" placeholder="Google" />
            <Magnifier color="#2a62b4" />
            <Caret />
          </SearchBox>
        </NavRow>
      </Frame>

      <LiveBar />
      <IcqBar />
      <GoogleBar />

      <TabRow>
        <Tool $w={18} $mr={12} aria-label="Favoriter"><GoldStar /></Tool>
        <Tool $w={17} $mr={15} aria-label="Lägg till favorit"><AddStar /></Tool>
        <Tab><IE />http://www.irsolutions.se/cybaero/document/Cy...</Tab>
        <NewTab aria-label="Ny flik" />
        <Spacer />
        <Tool $w={34} $mr={11} aria-label="Startsida"><House /><Caret /></Tool>
        <Tool $w={34} $mr={11} aria-label="Feeds"><Feed /><Caret $color="#777" /></Tool>
        <Tool $w={34} $mr={6} aria-label="Skriv ut"><SmallPrinter /><Caret /></Tool>
        <Tool $w={55} $mr={7}><PageEdit />Sida<Caret /></Tool>
        <Tool $w={74} $mr={4}><Gear />Verktyg<Caret /></Tool>
        <Chevron aria-label="Fler">»</Chevron>
      </TabRow>

      <PdfBar>
        <Grip />
        <Tool $w={24} $mr={11} aria-label="Print"><Printer /></Tool>
        <Tool $w={33} $mr={9} aria-label="Collaborate"><Collab /><Caret /></Tool>
        <Rule $mr={9} $color="#b5b5b5" />
        <Tool $w={26} aria-label="Create PDF"><GlobeGear /></Tool>
        <Grip $mr={8} />
        <Tool $w={20} aria-label="Previous page"><BigArrow /></Tool>
        <Tool $w={20} $mr={8} aria-label="Next page"><BigArrow down /></Tool>
        <PdfInput $w={54} $mr={6} aria-label="Page" defaultValue="Sec1:15" />
        <PageCount>(17 of 72)</PageCount>
        <Grip $mr={7} />
        <Tool $w={15} aria-label="Zoom out"><ZoomDot /></Tool>
        <Tool $w={15} $mr={9} aria-label="Zoom in"><ZoomDot plus /></Tool>
        <PdfInput $w={45} $mr={1} aria-label="Zoom" defaultValue="155%" />
        <Tool $w={9} $mr={8} aria-label="Zoom levels"><Caret /></Tool>
        <Grip $mr={4} />
        <Pressed aria-label="Fit width"><FitWidth /></Pressed>
        <Tool $w={18} aria-label="Fit page"><FitPage /></Tool>
        <Grip $mr={5} />
        <PdfInput $w={117} $mr={1} aria-label="Find" defaultValue="christer" />
        <Tool $w={9} aria-label="Find options"><Caret /></Tool>
        <Tool $w={21} aria-label="Find previous"><FindDoc prev /></Tool>
        <Tool $w={21} aria-label="Find next"><FindDoc /></Tool>
      </PdfBar>

      <Viewer>
        <SideNav>
          <button aria-label="Pages"><PagesIcon /></button>
          <button aria-label="Search"><Binoculars /></button>
          <Spacer />
          <button aria-label="Comments"><Bubbles /></button>
          <button aria-label="Attachments"><Clip /></button>
        </SideNav>
        <Page>
          <Column $w={615}>
            <Lines items={leftLines} />
            <Heading><Marked>Den civila marknaden</Marked></Heading>
            <Lines items={civilLines} />
          </Column>
          <Column $w={584}>
            <Lines items={rightLines} />
            <Heading><Marked>Prognos för den civila europeiska UAV-marknaden 2006–2015 (MUSD)</Marked></Heading>
            <ForecastChart />
            <Source><span>Källa: Flight International/Visiongain 2006</span>.</Source>
          </Column>
        </Page>
        <ScrollBar>
          <ScrollButton aria-label="Scroll up"><UpCaret /></ScrollButton>
          <Track $grow={136} />
          <ScrollButton $h={12} aria-label="Scroll thumb" />
          <Track $grow={466} />
          <ScrollButton aria-label="Scroll down"><Caret /></ScrollButton>
        </ScrollBar>
      </Viewer>

      <Status>
        <StatusCell $first>Done</StatusCell>
        {[1, 2, 3, 4, 5, 6].map((n) => <StatusCell key={n} $w={24} />)}
        <StatusCell $w={286} $pl={3}><Globe />Okänd zon | Skyddat läge: På</StatusCell>
        <StatusCell $w={104}><SizeGrip /></StatusCell>
      </Status>

      <TaskBar>
        <Start aria-label="Start">
          <StartOrb width="44" height="44" viewBox="0 0 44 44">
            <circle cx="22" cy="22" r="20.500" fill="#1b3a55" stroke="#0a1018" strokeWidth="2" />
            <circle cx="22" cy="22" r="18.500" fill="#245f8f" />
            <path d="M4 20a18 18 0 0 1 36 0q-18 6-36 0z" fill="#a9bccb" />
            <ellipse cx="22" cy="35" rx="12" ry="5" fill="#3cc4f0" />
            <svg x="10" y="9" width="25" height="25" viewBox="0 0 16 16">
              <path d="M2.600 2.600C4.500 1.600 6 1.900 7.700 2.800L6.800 7.600C5.100 6.700 3.600 6.600 1.700 7.500z" fill="#e8582a" />
              <path d="M8.600 3.100c1.800.8 3.500.8 5.500-.1l-1 4.800c-1.900.9-3.600.8-5.300 0z" fill="#8dc63a" />
              <path d="M1.500 8.400c1.900-.9 3.400-.8 5.100.1l-.9 4.800C4 12.400 2.500 12.300.6 13.200z" fill="#4aa6ee" />
              <path d="M7.600 8.900c1.700.8 3.400.9 5.300 0l-1 4.800c-1.900.9-3.500.9-5.200 0z" fill="#fcc72b" />
            </svg>
          </StartOrb>
        </Start>
        <Grip $w={8} $pitch={3} $mr={9} $color="#85898c" />
        <Quick>
          <Desktop /><Flower /><IE /><Firefox /><Outlook /><MediaPlayer /><Hedgehog />
        </Quick>
        <Grip $w={8} $pitch={3} $mr={8} $color="#85898c" />
        <Tasks>
          {tasks.map(([icon, label, kind], i) => (
            <Task key={i} $active={kind === 'active'}>
              {icon}{label}{kind === 'group' && <Caret $color="#fff" />}
            </Task>
          ))}
        </Tasks>
        <Tray>
          <Grip $w={8} $pitch={3} $color="#85898c" />
          <TrayText $w={29}>SV</TrayText>
          <Svg width="8" height="9" viewBox="0 0 8 9"><path d="M6.500 1 2 4.500l4.500 3.500" fill="none" stroke="#fff" strokeWidth="2" /></Svg>
          <Pawn /><Shuttle /><Shield /><ABall />
          <TrayText $w={10} />
          <Battery /><Network /><Speaker />
          <TrayText $w={34} $align="right">17:40</TrayText>
        </Tray>
      </TaskBar>
    </Window>
  );
}
